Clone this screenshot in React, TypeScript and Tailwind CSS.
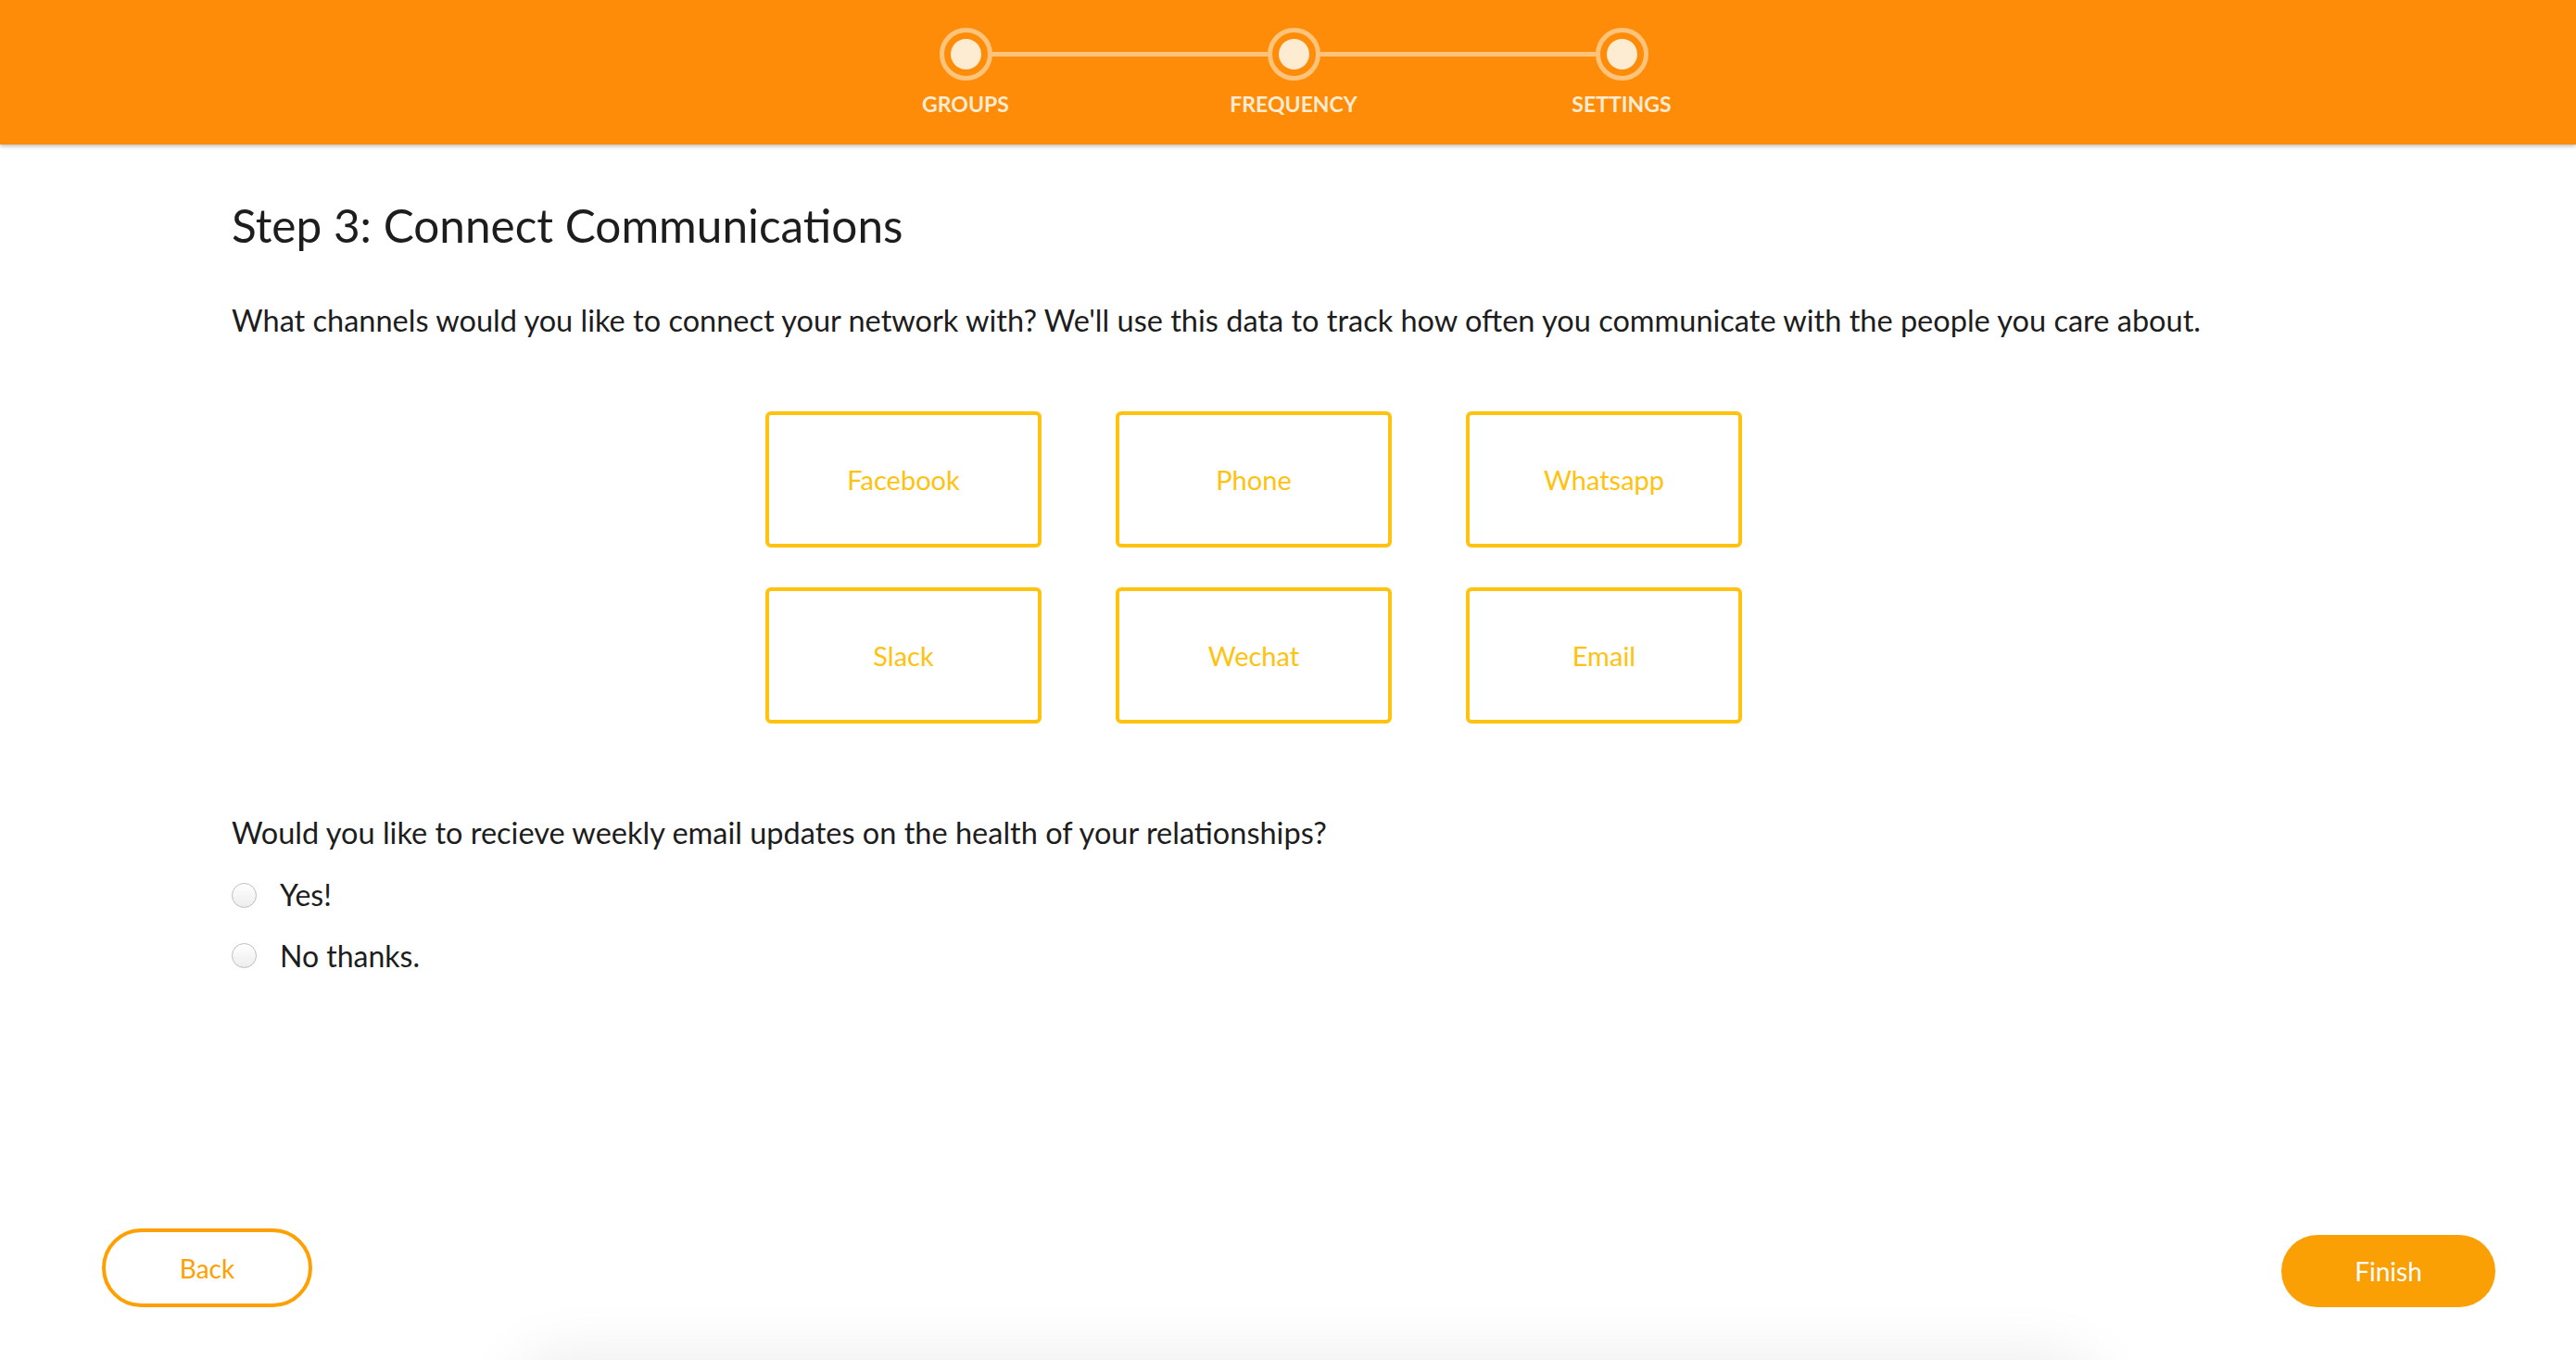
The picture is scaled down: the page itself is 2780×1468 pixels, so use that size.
import { useState } from 'react'

const steps = ['Groups', 'Frequency', 'Settings']
const channels = ['Facebook', 'Phone', 'Whatsapp', 'Slack', 'Wechat', 'Email']

function Stepper() {
  return (
    <div className="grid grid-cols-[354px_354px_354px] ml-[12px]">
      {steps.map((s, i) => (
        <div key={s} className="flex flex-col items-center">
          <div className="flex items-center w-full">
            <div className={`flex-1 h-[5px] ${i === 0 ? 'bg-transparent' : 'bg-[#ffc47c]'}`} />
            <div className="w-[57px] h-[57px] rounded-full border-[5px] border-[#ffc47c] flex items-center justify-center shrink-0">
              <div className="w-[33px] h-[33px] rounded-full bg-[#fdebd2]" />
            </div>
            <div className={`flex-1 h-[5px] ${i === steps.length - 1 ? 'bg-transparent' : 'bg-[#ffc47c]'}`} />
          </div>
          <p className="mt-[14px] text-[23px] leading-none font-bold uppercase text-[#fdebd2]">{s}</p>
        </div>
      ))}
    </div>
  )
}

export default function App() {
  const [selected, setSelected] = useState<string[]>([])
  const [updates, setUpdates] = useState<string | null>(null)

  function toggle(c: string) {
    setSelected(prev => prev.includes(c) ? prev.filter(x => x !== c) : [...prev, c])
  }

  return (
    <div className="relative h-[1468px] overflow-hidden bg-white flex flex-col text-[#1d1d1d]" style={{ fontFamily: 'Lato, "Open Sans", sans-serif' }}>
      <header className="h-[156px] shrink-0 bg-[#ff8c08] shadow-[0_2px_4px_rgba(0,0,0,0.25)] flex justify-center pt-[30px] z-10">
        <Stepper />
      </header>

      <main className="flex-1 ml-[250px] w-[2206px]">
        <h1 className="mt-[58px] text-[49.5px] leading-[1.2] font-normal">Step 3: Connect Communications</h1>
        <p className="mt-[53px] text-[32.5px] leading-[1.2]">
          What channels would you like to connect your network with? We'll use this data to track how often you communicate with the people you care about.
        </p>

        <div className="mt-[79px] flex justify-center">
          <div className="grid grid-cols-[298px_298px_298px] gap-x-[80px] gap-y-[43px]">
            {channels.map(c => (
              <button
                key={c}
                onClick={() => toggle(c)}
                className={`h-[147px] rounded-[6px] border-4 border-[#ffc20e] text-[29px] flex items-center justify-center ${selected.includes(c) ? 'bg-[#ffc20e] text-white' : 'bg-white text-[#ffc20e]'}`}
              >
                {c}
              </button>
            ))}
          </div>
        </div>

        <p className="mt-[98px] text-[32.5px] leading-[1.2]">Would you like to recieve weekly email updates on the health of your relationships?</p>
        <div className="mt-[29px] flex flex-col gap-[27px]">
          {['Yes!', 'No thanks.'].map(o => (
            <label key={o} className="flex items-center gap-[25px] text-[32px] leading-[1.2] cursor-pointer">
              <input
                type="radio"
                name="updates"
                checked={updates === o}
                onChange={() => setUpdates(o)}
                className="appearance-none w-[27px] h-[27px] rounded-full border border-[#bdbdbd] bg-gradient-to-b from-white to-[#ededed] checked:border-[8px] checked:border-[#ff9f00] shrink-0"
              />
              {o}
            </label>
          ))}
        </div>
      </main>

      <footer className="shrink-0 flex items-end justify-between pl-[110px] pr-[87px] pb-[57px]">
        <button className="w-[227px] h-[85px] rounded-full border-4 border-[#ff9f00] text-[#ff9f00] text-[28px]">Back</button>
        <button className="w-[231px] h-[78px] rounded-full bg-[#faa005] text-white text-[28px]">Finish</button>
      </footer>

      <div className="absolute top-full left-[560px] w-[1700px] h-[200px] rounded-[40px] shadow-[0_0_70px_rgba(0,0,0,0.09)]" />
    </div>
  )
}
